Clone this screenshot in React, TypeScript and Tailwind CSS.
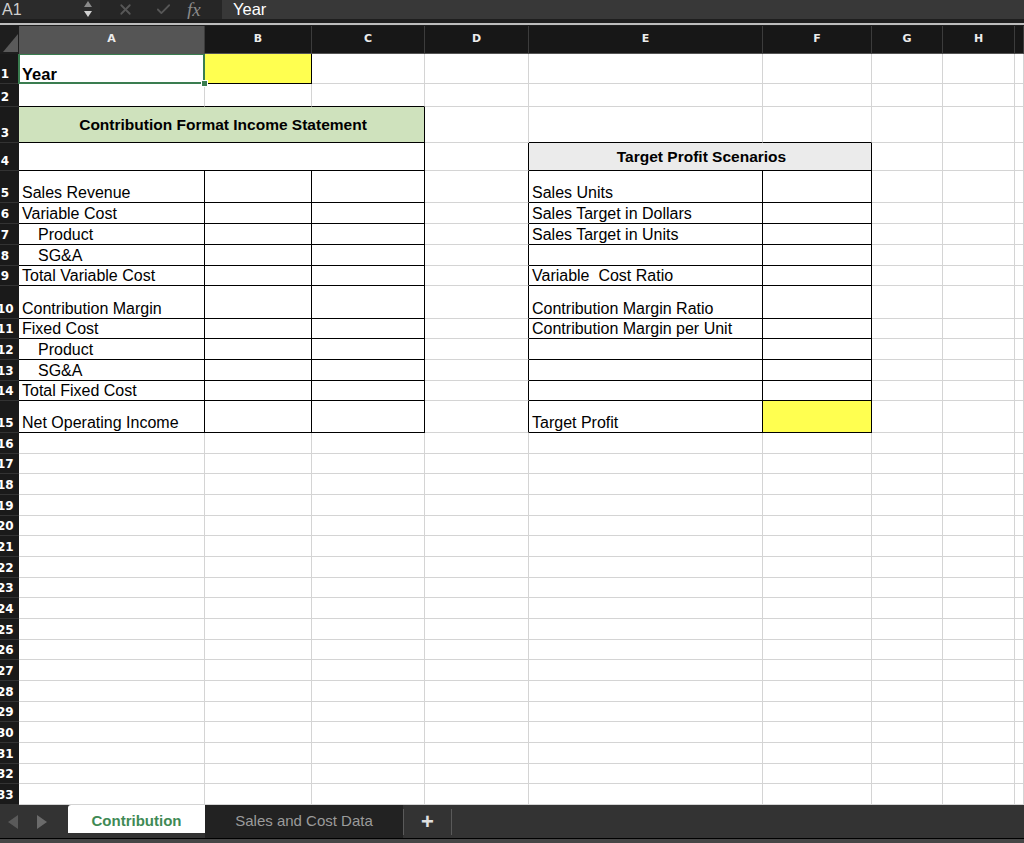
import clsx from 'clsx';
import { Check, X } from 'lucide-react';

type Cell = {
  w: string;
  text?: string;
  bg?: string;
  bold?: boolean;
  center?: boolean;
  indent?: boolean;
  r?: boolean;
  b?: boolean;
  sel?: boolean;
};

const W = {
  A: 'w-[186px]',
  B: 'w-[107px]',
  C: 'w-[113px]',
  D: 'w-[104px]',
  E: 'w-[234px]',
  F: 'w-[109px]',
  G: 'w-[71px]',
  H: 'w-[72px]',
  I: 'flex-1',
  AC: 'w-[406px]',
  EF: 'w-[343px]',
};

const columns = [
  { label: 'A', w: W.A, active: true },
  { label: 'B', w: W.B },
  { label: 'C', w: W.C },
  { label: 'D', w: W.D },
  { label: 'E', w: W.E },
  { label: 'F', w: W.F },
  { label: 'G', w: W.G },
  { label: 'H', w: W.H },
  { label: '', w: W.I },
];

const heights = [
  'h-[30px]', 'h-[23px]', 'h-[36px]', 'h-[28px]', 'h-[32px]', 'h-[21px]', 'h-[21px]', 'h-[21px]',
  'h-[20px]', 'h-[33px]', 'h-[20px]', 'h-[21px]', 'h-[21px]', 'h-[20px]', 'h-[32px]',
];

const leftLabels: [string, boolean][] = [
  ['Sales Revenue', false],
  ['Variable Cost', false],
  ['Product', true],
  ['SG&A', true],
  ['Total Variable Cost', false],
  ['Contribution Margin', false],
  ['Fixed Cost', false],
  ['Product', true],
  ['SG&A', true],
  ['Total Fixed Cost', false],
  ['Net Operating Income', false],
];

const rightLabels = [
  'Sales Units',
  'Sales Target in Dollars',
  'Sales Target in Units',
  '',
  'Variable  Cost Ratio',
  'Contribution Margin Ratio',
  'Contribution Margin per Unit',
  '',
  '',
  '',
  'Target Profit',
];

const tail = (): Cell[] => [{ w: W.G }, { w: W.H }, { w: W.I }];

function buildRows(): { h: string; cells: Cell[] }[] {
  const rows: { h: string; cells: Cell[] }[] = [];
  rows.push({
    h: heights[0],
    cells: [
      { w: W.A, text: 'Year', bold: true, sel: true },
      { w: W.B, bg: 'bg-[#ffff50]', r: true, b: true },
      { w: W.C }, { w: W.D }, { w: W.E }, { w: W.F }, ...tail(),
    ],
  });
  rows.push({
    h: heights[1],
    cells: [{ w: W.A, b: true }, { w: W.B, b: true }, { w: W.C, b: true }, { w: W.D }, { w: W.E }, { w: W.F }, ...tail()],
  });
  rows.push({
    h: heights[2],
    cells: [
      { w: W.AC, text: 'Contribution Format Income Statement', bg: 'bg-[#cfe2bd]', bold: true, center: true, r: true, b: true },
      { w: W.D }, { w: W.E, b: true }, { w: W.F, b: true }, ...tail(),
    ],
  });
  rows.push({
    h: heights[3],
    cells: [
      { w: W.AC, r: true, b: true },
      { w: W.D, r: true },
      { w: W.EF, text: 'Target Profit Scenarios', bg: 'bg-[#ebebeb]', bold: true, center: true, r: true, b: true },
      ...tail(),
    ],
  });
  leftLabels.forEach(([label, indent], i) => {
    rows.push({
      h: heights[4 + i],
      cells: [
        { w: W.A, text: label, indent, r: true, b: true },
        { w: W.B, r: true, b: true },
        { w: W.C, r: true, b: true },
        { w: W.D, r: true },
        { w: W.E, text: rightLabels[i], r: true, b: true },
        { w: W.F, r: true, b: true, bg: i === 10 ? 'bg-[#ffff50]' : undefined },
        ...tail(),
      ],
    });
  });
  for (let i = 0; i < 18; i++) {
    rows.push({
      h: 'h-[20.67px]',
      cells: [{ w: W.A }, { w: W.B }, { w: W.C }, { w: W.D }, { w: W.E }, { w: W.F }, ...tail()],
    });
  }
  return rows;
}

function GridCell({ c }: { c: Cell }) {
  return (
    <div
      className={clsx(
        'relative flex shrink-0 border-r border-b whitespace-pre leading-[18px] text-black',
        c.w,
        c.bg ?? 'bg-white',
        c.r ? 'border-r-black' : 'border-r-[#d4d4d4]',
        c.b ? 'border-b-black' : 'border-b-[#d4d4d4]',
        c.center ? 'items-center justify-center' : 'items-end',
        c.indent ? 'pl-[19px]' : 'pl-[3px]',
        c.bold ? 'font-bold' : 'text-[16px]',
        c.bold && (c.sel ? 'text-[16.5px]' : 'text-[15.5px]'),
      )}
    >
      {c.text}
      {c.sel && (
        <>
          <div className="absolute -left-[1px] -top-[1px] -right-[1px] -bottom-[1px] border-2 border-[#3a7d50]" />
          <div className="absolute -right-[4px] -bottom-[4px] z-10 h-[7px] w-[7px] border border-white bg-[#3a7d50]" />
        </>
      )}
    </div>
  );
}

export default function App() {
  const rows = buildRows();
  return (
    <div className="flex h-[843px] w-[1024px] flex-col overflow-hidden bg-[#333] font-['Liberation_Sans',Arial,sans-serif]">
      {/* formula bar */}
      <div className="flex h-[19px] shrink-0">
        <div className="flex w-[100px] items-center justify-between bg-[#2b2b2b] pl-[2px] pr-[8px]">
          <span className="text-[16px] leading-[19px] text-[#cfcfcf]">A1</span>
          <svg width="8" height="17" viewBox="0 0 8 17">
            <path d="M0 6 L4 0 L8 6 Z" fill="#8a8a8a" />
            <path d="M0 10 L8 10 L4 16 Z" fill="#d0d0d0" />
          </svg>
        </div>
        <div className="flex w-[122px] items-center bg-[#262626]">
          <X size={17} strokeWidth={2.5} color="#575757" className="ml-[17px]" />
          <Check size={17} strokeWidth={2.5} color="#575757" className="ml-[21px]" />
          <span className="ml-[15px] font-['Liberation_Serif',serif] text-[19px] italic leading-[18px] text-[#8a8a8a]">fx</span>
        </div>
        <div className="flex-1 bg-[#383838] pl-[11px] text-[16.5px] leading-[19px] text-white">Year</div>
      </div>
      <div className="h-[4px] shrink-0 bg-[#1e1e1e]" />
      <div className="h-[2px] shrink-0 bg-[#bdbdbd]" />
      <div className="h-[1px] shrink-0 bg-[#1e1e1e]" />

      {/* column headers */}
      <div className="flex h-[28px] shrink-0 bg-[#171717] font-['DejaVu_Sans',sans-serif] text-[11px] font-semibold text-[#ececec]">
        <div className="flex w-[19px] shrink-0 items-end justify-end bg-[#1e1e1e] pb-[2px] pr-[1px]">
          <svg width="16" height="22" viewBox="0 0 16 22">
            <path d="M1 22 L16 22 L16 4 Z" fill="#5a5a5a" />
          </svg>
        </div>
        {columns.map((col) => (
          <div
            key={col.label || 'I'}
            className={clsx(
              'flex shrink-0 items-center justify-center border-r border-b border-r-[#3c3c3c] border-b-[#555]',
              col.w,
              col.active && 'bg-[#555]',
            )}
          >
            {col.label}
          </div>
        ))}
      </div>

      {/* grid */}
      <div className="h-[751px] shrink-0 overflow-hidden bg-white">
        {rows.map((row, i) => (
          <div key={i} className={clsx('flex', row.h)}>
            <div className="flex w-[19px] shrink-0 items-end overflow-hidden border-b border-b-[#333] bg-[#1a1a1a]">
              <span className="-ml-[3px] w-[16px] shrink-0 pb-[2px] text-center font-['DejaVu_Sans',sans-serif] text-[12px] font-bold leading-[14px] text-white">
                {i + 1}
              </span>
            </div>
            {row.cells.map((c, j) => (
              <GridCell key={j} c={c} />
            ))}
          </div>
        ))}
      </div>

      {/* sheet tabs */}
      <div className="flex h-[33px] shrink-0 bg-[#333]">
        <div className="flex w-[68px] items-center gap-[19px] pl-[8px]">
          <svg width="10" height="14" viewBox="0 0 10 14">
            <path d="M10 0 L0 7 L10 14 Z" fill="#5a5a5a" />
          </svg>
          <svg width="10" height="14" viewBox="0 0 10 14">
            <path d="M0 0 L10 7 L0 14 Z" fill="#6b6b6b" />
          </svg>
        </div>
        <div className="flex h-[28px] w-[137px] items-center justify-center rounded-tl-[3px] bg-white pt-[4px] text-[15px] font-bold text-[#3f8a55]">
          Contribution
        </div>
        <div className="flex h-full w-[198px] items-center justify-center bg-[#222] text-[15px] text-[#9b9b9b]">
          Sales and Cost Data
        </div>
        <div className="mt-[4px] flex h-[26px] w-[49px] items-center justify-center border-l border-r border-[#5a5a5a] text-[22px] font-bold leading-none text-[#e0e0e0]">
          +
        </div>
      </div>
      <div className="h-[1px] shrink-0 bg-black" />
      <div className="flex-1 bg-[#464646]" />
    </div>
  );
}
